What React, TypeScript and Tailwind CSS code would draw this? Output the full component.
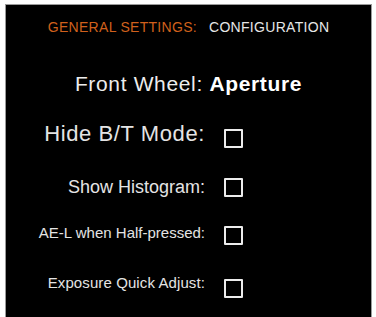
import React from "react";

const rows = [
  { label: "Hide B/T Mode:", size: "text-[22px] tracking-[0.6px]", mt: "mt-[26px]", mb: "mb-[8px]" },
  { label: "Show Histogram:", size: "text-[18px]", mt: "mt-[19px]", mb: "mb-0" },
  { label: "AE-L when Half-pressed:", size: "text-[15px]", mt: "mt-[18px]", mb: "mb-[6px]" },
  { label: "Exposure Quick Adjust:", size: "text-[15px] tracking-[0.1px]", mt: "mt-[23px]", mb: "mb-[12px]" },
];

export default function App() {
  return (
    <div className="w-[376px] h-[317px] bg-white overflow-hidden pl-[5px] pt-[4px]" style={{ fontFamily: '"Liberation Sans", Arial, sans-serif' }}>
      <div className="w-[367px] h-[313px] bg-black border-l border-t border-r border-[#9a9a9a] flex flex-col">
        <div className="pt-[14px] flex justify-center items-center text-[14px] leading-[16px] tracking-[0.3px]">
          <span className="text-[#d0601c]">GENERAL SETTINGS:</span>
          <span className="text-[#e6e6e6] ml-[12px]">CONFIGURATION</span>
        </div>
        <div className="mt-[36px] flex justify-center items-center text-[21px] leading-[26px] tracking-[0.65px] text-[#ededed]">
          <span>Front Wheel:&nbsp;</span>
          <span className="font-bold text-white">Aperture</span>
        </div>
        {rows.map((r) => (
          <div key={r.label} className={`${r.mt} h-[30px] flex items-center`}>
            <div className={`w-[199px] text-right text-[#e4e4e4] leading-none ${r.size} ${r.mb}`}>{r.label}</div>
            <div className="ml-[19px] w-[19px] h-[19px] border-2 border-[#ececec] rounded-[1px]" />
          </div>
        ))}
      </div>
    </div>
  );
}
